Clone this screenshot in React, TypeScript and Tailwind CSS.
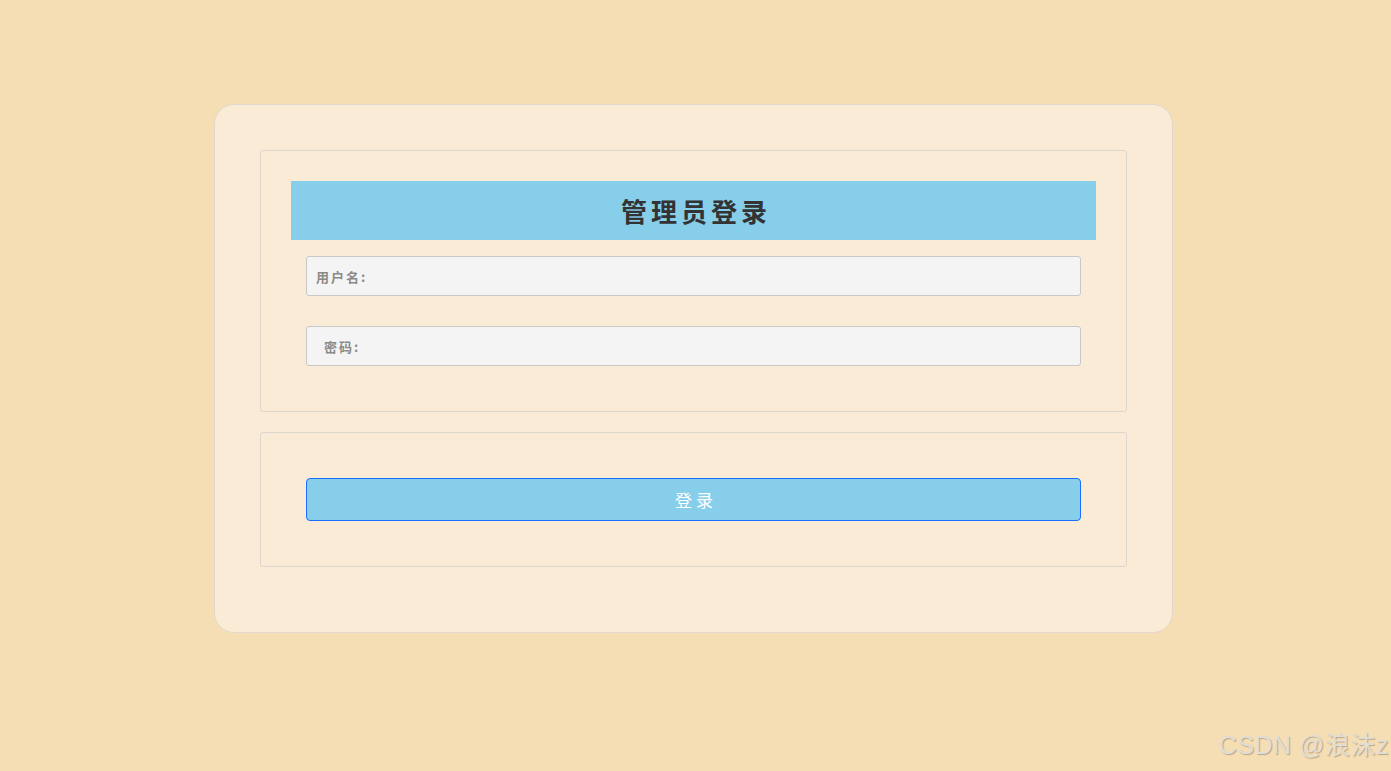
export default function App() {
  return (
    <div className="relative min-h-[771px] w-full bg-[#f5deb3] pt-[104px] font-['Noto_Sans_CJK_SC',sans-serif]">
      <div className="ml-[214px] w-[959px] rounded-[20px] border border-[#e0d8cc] bg-[#faebd7] px-[45px] pb-[65px] pt-[45px]">
        <div className="rounded-[3px] border border-[#dcd6cf] px-[30px] pb-[45px] pt-[30px]">
          <div className="flex h-[59px] items-center justify-center bg-[#87ceeb] pl-[5px] text-[26px] font-bold tracking-[4px] text-[#333]">
            管理员登录
          </div>
          <div className="px-[15px] pt-[16px]">
            <input
              placeholder="用户名:"
              className="block h-[40px] w-full rounded-[3px] border border-[#c8c8c8] bg-[#f4f4f4] px-[9px] text-[13px] font-bold tracking-[2px] outline-none placeholder:text-[#8a8a8a]"
            />
            <input
              placeholder=" 密码:"
              className="mt-[30px] block h-[40px] w-full rounded-[3px] border border-[#c8c8c8] bg-[#f4f4f4] px-[12px] text-[13px] font-bold tracking-[2px] outline-none placeholder:text-[#8a8a8a]"
            />
          </div>
        </div>
        <div className="mt-[20px] rounded-[3px] border border-[#dcd6cf] px-[45px] py-[45px]">
          <button className="block h-[43px] w-full rounded-[4px] border border-[#1a6dff] bg-[#87ceeb] pl-[5px] text-[17px] tracking-[4px] text-white">
            登录
          </button>
        </div>
      </div>
      <div className="absolute bottom-[7px] right-[2px] font-['Liberation_Sans','Noto_Sans_CJK_SC',sans-serif] text-[25px] tracking-[0.5px] text-[#e2ddd5] [text-shadow:1px_1px_1px_rgba(0,0,0,0.25)]">
        CSDN @浪沫z
      </div>
    </div>
  )
}
